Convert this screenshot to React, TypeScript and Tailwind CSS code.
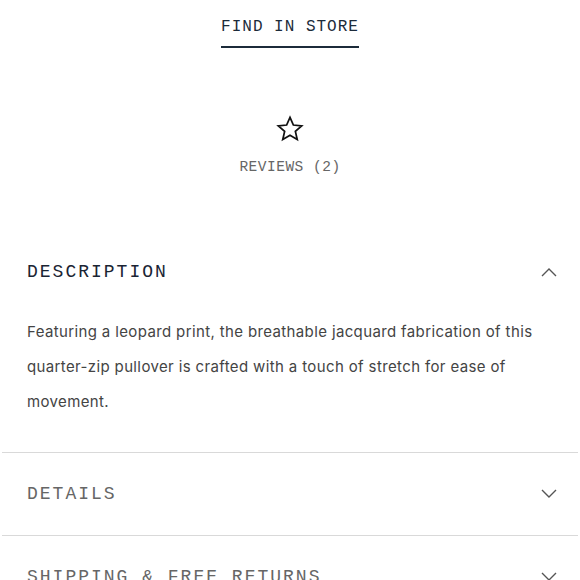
const mono = { fontFamily: '"Liberation Mono", "DejaVu Sans Mono", monospace' }

function Chevron({ up }: { up?: boolean }) {
  return (
    <svg width="16" height="10" viewBox="0 0 16 10" fill="none" stroke="#555" strokeWidth="1.4">
      {up ? <polyline points="1,9 8,2 15,9" /> : <polyline points="1,1 8,8 15,1" />}
    </svg>
  )
}

function Section({ title }: { title: string }) {
  return (
    <div className="border-t border-[#d9d9d9] pl-[25px] pr-[21px] py-[29px]">
      <div className="flex items-center justify-between">
        <h3 className="text-[18px] leading-[24px] tracking-[2px] text-[#666666]" style={mono}>
          {title}
        </h3>
        <Chevron />
      </div>
    </div>
  )
}

export default function App() {
  return (
    <div className="h-[580px] w-[580px] overflow-hidden bg-white px-[2px]">
      <div className="flex flex-col items-center pt-[16px]">
        <button
          className="border-b-2 border-[#1c2b3a] pb-[8px] text-[16px] leading-[22px] tracking-[1px] text-[#1c2b3a]"
          style={mono}
        >
          FIND IN STORE
        </button>
        <svg
          className="mt-[67px]"
          width="28"
          height="28"
          viewBox="0 0 24 24"
          fill="none"
          stroke="#111"
          strokeWidth="1.5"
        >
          <polygon points="12,2 14.9,8.6 22,9.3 16.6,14 18.2,21 12,17.3 5.8,21 7.4,14 2,9.3 9.1,8.6" />
        </svg>
        <div
          className="mt-[14px] text-[14.5px] leading-[20px] tracking-[0.5px] text-[#666666]"
          style={mono}
        >
          REVIEWS (2)
        </div>
      </div>

      <div className="mt-[83px] pl-[25px]">
        <div className="flex items-center justify-between pr-[21px]">
          <h3 className="text-[18px] leading-[24px] tracking-[2px] text-[#1a2433]" style={mono}>
            DESCRIPTION
          </h3>
          <Chevron up />
        </div>
        <p
          className="mt-[30px] pb-[33px] pr-[25px] text-[15px] leading-[35px] tracking-[0.37px] text-[#444444]"
          style={{ fontFamily: 'Inter, "Liberation Sans", sans-serif' }}
        >
          Featuring a leopard print, the breathable jacquard fabrication of this quarter-zip
          pullover is crafted with a touch of stretch for ease of movement.
        </p>
      </div>

      <Section title="DETAILS" />
      <Section title="SHIPPING & FREE RETURNS" />
    </div>
  )
}
